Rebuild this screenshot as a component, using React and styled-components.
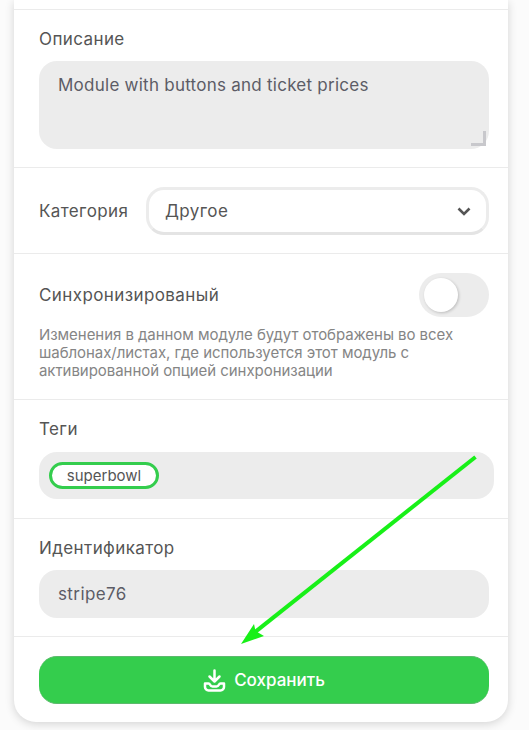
import React from "react";
import styled, { createGlobalStyle } from "styled-components";

const GlobalStyle = createGlobalStyle`
  html, body {
    margin: 0;
    height: 730px;
    overflow: hidden;
    background: #fbfbfb;
    font-family: Inter, "Noto Sans", sans-serif;
  }
  * { box-sizing: border-box; }
`;

const Page = styled.div`
  width: 529px;
  height: 730px;
  position: relative;
  padding-left: 14px;
`;

const Card = styled.div`
  width: 494px;
  height: 722px;
  background: #fff;
  border-radius: 0 0 22px 22px;
  box-shadow: 0 2px 10px rgba(0, 0, 0, 0.16);
`;

const Section = styled.section`
  height: ${(props) => props.height}px;
  padding: ${(props) => props.top ?? 19}px 19px 0 25px;
  border-bottom: ${(props) => (props.last ? "none" : "1px solid #ebebeb")};
`;

const Label = styled.div`
  font-size: 17px;
  letter-spacing: 0.4px;
  line-height: 20px;
  color: #555;
  margin-bottom: ${(props) => props.gap ?? 12}px;
`;

const TextArea = styled.div`
  position: relative;
  height: 88px;
  padding: 13px 19px;
  background: #ececec;
  border-radius: 18px;
  font-size: 17px;
  letter-spacing: 0.25px;
  line-height: 22px;
  color: #5c5c66;
`;

const ResizeHandle = styled.span`
  position: absolute;
  right: 3px;
  bottom: 3px;
  width: 15px;
  height: 15px;
  border-right: 3px solid #c8c8cc;
  border-bottom: 3px solid #c8c8cc;
`;

const InlineRow = styled.div`
  display: flex;
  align-items: center;
  justify-content: space-between;
`;

const InlineLabel = styled(Label)`
  margin-bottom: 0;
`;

const Select = styled.div`
  width: 343px;
  height: 48px;
  display: flex;
  align-items: center;
  justify-content: space-between;
  padding: 0 15px 0 16px;
  background: #fff;
  border: 3px solid #ececec;
  border-bottom-color: #e4e4e4;
  border-radius: 18px;
  font-size: 17px;
  letter-spacing: 0.4px;
  color: #555;
`;

const Toggle = styled.div`
  width: 70px;
  height: 44px;
  padding: 5px;
  background: #ececec;
  border-radius: 22px;
`;

const Knob = styled.div`
  width: 34px;
  height: 34px;
  background: #fff;
  border-radius: 50%;
  box-shadow: 1px 1px 3px rgba(0, 0, 0, 0.2);
`;

const Help = styled.p`
  margin: 9px 0 0;
  font-size: 15px;
  letter-spacing: -0.05px;
  line-height: 18px;
  color: #858585;
`;

const TagBox = styled.div`
  width: 455px;
  height: 47px;
  display: flex;
  align-items: center;
  padding-left: 10px;
  background: #ececec;
  border-radius: 18px;
`;

const Tag = styled.span`
  width: 110px;
  height: 27px;
  display: flex;
  align-items: center;
  justify-content: center;
  background: #fff;
  border: 3px solid #34cd4d;
  border-radius: 14px;
  font-size: 15px;
  color: #555;
`;

const Input = styled.div`
  height: 48px;
  display: flex;
  align-items: center;
  padding-left: 19px;
  background: #ececec;
  border-radius: 18px;
  font-size: 17px;
  letter-spacing: 0.4px;
  color: #5c5c66;
`;

const SaveButton = styled.button`
  width: 450px;
  height: 48px;
  display: flex;
  align-items: center;
  justify-content: center;
  gap: 8px;
  padding: 0;
  background: #34cd4d;
  border: none;
  border-top: 1px solid #5cb96c;
  border-bottom: 1px solid #5cb96c;
  border-radius: 18px;
  font-family: inherit;
  font-size: 17px;
  font-weight: 500;
  color: #fff;
`;

const Arrow = styled.svg`
  position: absolute;
  left: 0;
  top: 0;
  pointer-events: none;
`;

function App() {
  return (
    <Page>
      <GlobalStyle />
      <Card>
        <Section height={10} top={0} />
        <Section height={158}>
          <Label>Описание</Label>
          <TextArea>
            Module with buttons and ticket prices
            <ResizeHandle />
          </TextArea>
        </Section>
        <Section height={86}>
          <InlineRow>
            <InlineLabel>Категория</InlineLabel>
            <Select>
              Другое
              <svg width="14" height="9" viewBox="0 0 14 9" fill="none">
                <path d="M1.5 1.5 7 7l5.5-5.5" stroke="#555" strokeWidth="2.6" />
              </svg>
            </Select>
          </InlineRow>
        </Section>
        <Section height={146}>
          <InlineRow>
            <InlineLabel>Синхронизированый</InlineLabel>
            <Toggle>
              <Knob />
            </Toggle>
          </InlineRow>
          <Help>
            Изменения в данном модуле будут отображены во всех
            <br />
            шаблонах/листах, где используется этот модуль с
            <br />
            активированной опцией синхронизации
          </Help>
        </Section>
        <Section height={119}>
          <Label gap={13}>Теги</Label>
          <TagBox>
            <Tag>superbowl</Tag>
          </TagBox>
        </Section>
        <Section height={118}>
          <Label>Идентификатор</Label>
          <Input>stripe76</Input>
        </Section>
        <Section height={85} last>
          <SaveButton>
            <svg width="23" height="23" viewBox="0 0 23 23" fill="none" stroke="#fff" strokeWidth="2.5" strokeLinecap="round" strokeLinejoin="round">
              <path d="M11.5 1.5v10.5M6.5 7.5l5 5 5-5" />
              <path d="M2 14.5h3.5c.8 0 1.2.5 1.6 1.3.5 1 1 1.7 2.4 1.7h4c1.4 0 1.9-.7 2.4-1.7.4-.8.8-1.3 1.6-1.3H21V18a3.5 3.5 0 0 1-3.5 3.5h-12A3.5 3.5 0 0 1 2 18z" />
            </svg>
            Сохранить
          </SaveButton>
        </Section>
      </Card>
      <Arrow width="529" height="730" viewBox="0 0 529 730">
        <path d="M475.5 457 250 636" stroke="#18f018" strokeWidth="4" />
        <path d="M241 644 254 624 255.5 631 264 636z" fill="#18f018" />
      </Arrow>
    </Page>
  );
}

export default App;
